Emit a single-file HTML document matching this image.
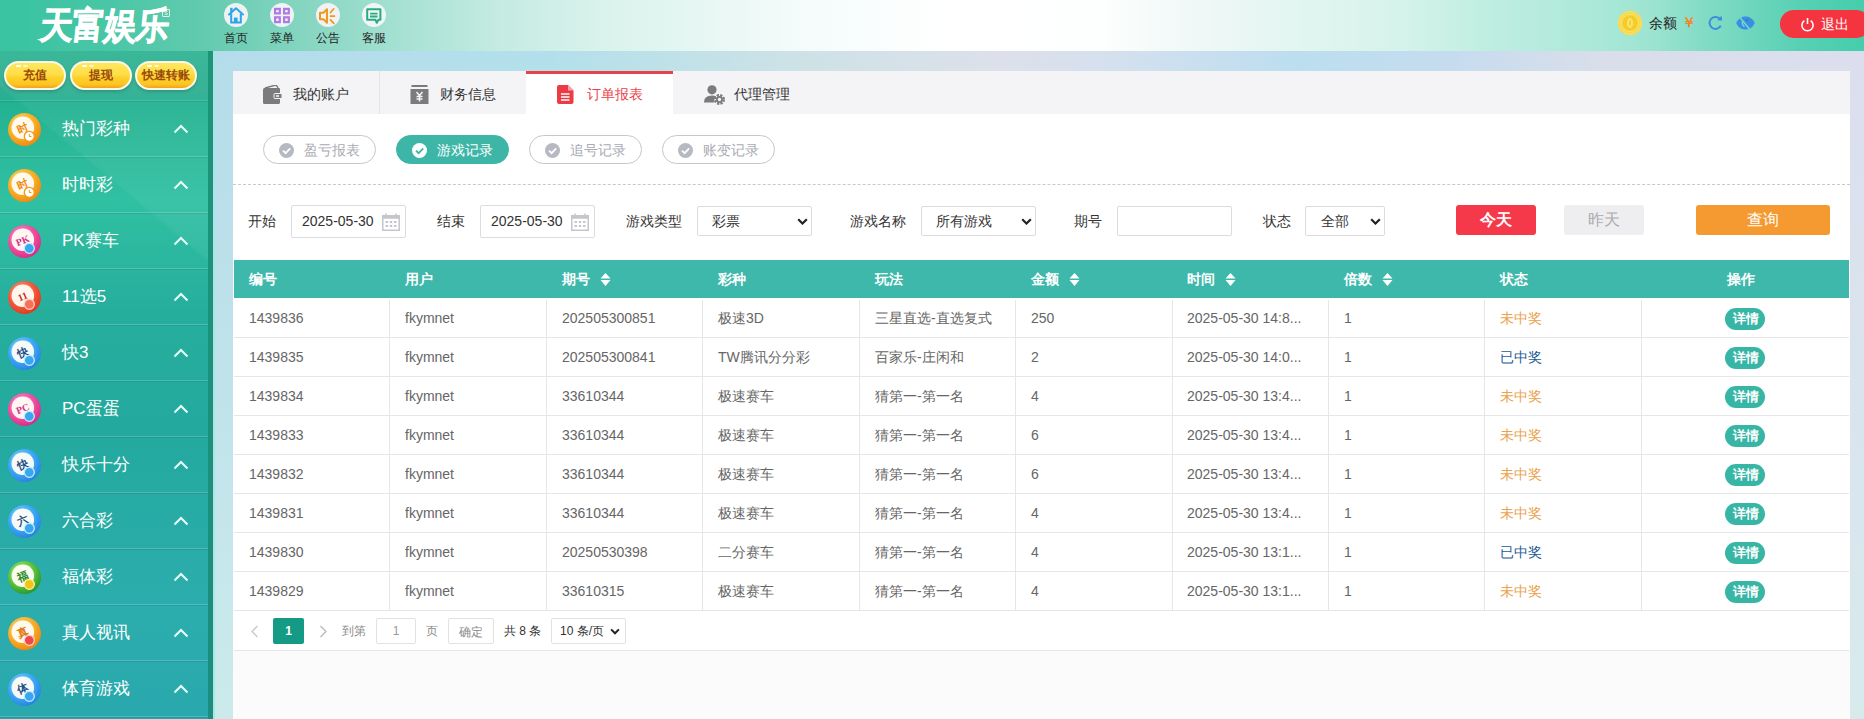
<!DOCTYPE html>
<html><head><meta charset="utf-8">
<style>
*{margin:0;padding:0;box-sizing:border-box}
html,body{width:1864px;height:719px;overflow:hidden;font-family:"Liberation Sans",sans-serif;font-size:14px;color:#333;background:#c9e4ec}
.abs{position:absolute}
#hdr{position:absolute;left:0;top:0;width:1864px;height:51px;background:linear-gradient(90deg,#38c3a1 0.0%,#47c6a5 5.36%,#62caae 10.73%,#84d5c0 16.09%,#a6e1d3 21.46%,#c5ebe2 26.82%,#d9f2ec 32.19%,#f4fbfb 42.92%,#ffffff 50.97%,#fdfefe 59.01%,#eff8f6 64.38%,#d5f3ea 75.11%,#bdede0 80.47%,#aae8d8 85.84%,#9de4d1 88.52%,#84dcc6 91.2%,#6fd6bd 93.88%,#58d0b4 96.57%,#44ceab 100.0%)}
#side{position:absolute;left:0;top:51px;width:213px;height:668px;background:linear-gradient(40deg,rgba(255,255,255,0) 0%,rgba(255,255,255,0) 74.5%,rgba(255,255,255,.05) 75%,rgba(255,255,255,.05) 100%),linear-gradient(180deg,#30b394 0.0%,#2eae91 5.99%,#22b191 7.49%,#2bb99a 14.97%,#30c0a2 22.46%,#26ae9d 38.92%,#23a99e 56.89%,#2cadad 82.34%,#29a8ad 100.0%)}
#side .bd{position:absolute;left:208px;top:0;width:5px;height:668px;background:linear-gradient(180deg,#1e9478,#1d8d7f)}
#main{position:absolute;left:213px;top:51px;width:1651px;height:668px;background:linear-gradient(180deg,rgba(214,240,236,0) 0%,rgba(212,240,236,.7) 100%),linear-gradient(90deg,#b5dcea 0.0%,#b2e0ea 20.41%,#cde2e6 35.55%,#dde0ea 47.67%,#d6e0ee 53.73%,#bbdeef 65.84%,#c5dcee 74.92%,#d9deea 84.01%,#dcdeee 100.0%)}
#card{position:absolute;left:233px;top:71px;width:1617px;height:660px;background:linear-gradient(180deg,#fff 0,#fff 580px,#fbfbfc 580px)}
.nav{top:3px;width:24px}
.nav .ic{width:24px;height:24px;border-radius:50%;background:rgba(244,244,246,.95)}
.nav .lb{position:absolute;left:0;top:27px;width:24px;font-size:12px;line-height:17px;color:#222;text-align:center;white-space:nowrap}
.ybtn{position:absolute;top:10px;width:62px;height:29px;border-radius:15px;background:#fbf9e8;padding:2px;box-shadow:0 2px 3px rgba(0,70,50,.22)}
.ybtn:before{content:"";position:absolute;left:12px;top:4px;width:5px;height:2px;border-radius:1px;background:#fff;box-shadow:7px 0 0 -0.3px #fff}
.ybtn span{display:block;width:100%;height:100%;border-radius:13px;background:linear-gradient(180deg,#ffe75e 0%,#fede48 45%,#fdcf2a 60%,#fbc623 85%,#f4a01a 100%);font-size:12px;font-weight:bold;color:#9a4a06;text-align:center;line-height:25px;white-space:nowrap}
.mi{position:absolute;left:0;width:208px;height:56px}
.mi .ball{position:absolute;left:8px;top:12px}
.mi .ball b{position:absolute;left:5px;top:6px;width:20px;font-size:11px;line-height:16px;text-align:center;transform:rotate(-15deg)}
.mi .ball i{position:absolute;left:19px;top:19px;width:11px;height:11px;border-radius:50%;border:1.5px solid #fff}
.mi .mt{position:absolute;left:62px;top:17px;font-size:17px;line-height:22px;color:#fff;white-space:nowrap}
.mi .chev{position:absolute;left:173px;top:23px}
.mi .sep{position:absolute;left:0;top:55px;width:208px;height:1px;background:rgba(255,255,255,.19);box-shadow:0 1px 0 rgba(0,40,30,.1)}
#tabbar{position:absolute;left:0;top:0;width:1617px;height:43px;background:#f4f4f7}
.tab{position:absolute;top:0;height:43px}
.tab .ti{position:absolute;top:14px}
.tab span{position:absolute;top:13px;font-size:14px;line-height:20px;color:#333;white-space:nowrap}
.tab.act{background:#fff;height:44px;border-top:3px solid #e8424a}
.tab.act .ti{top:11px}
.tab.act span{top:10px}
.tdiv{position:absolute;top:0;width:1px;height:43px;background:#e4e4e8}
.pill{position:absolute;top:64px;width:113px;height:29px;border:1px solid #c6c6cc;border-radius:15px;color:#aaabb3}
.pill i{position:absolute;left:15px;top:7px;width:15px;height:15px;line-height:0}
.pill span{position:absolute;left:40px;top:4px;font-size:14px;line-height:21px;white-space:nowrap}
.pill.on{background:#3db6a8;border-color:#3db6a8;color:#fff}
.lbl{position:absolute;top:140px;font-size:14px;line-height:20px;color:#333;white-space:nowrap}
.inp{position:absolute;border:1px solid #dcdcdf;border-radius:2px;background:#fff}
.inp span{position:absolute;font-size:14px;line-height:20px;color:#333;white-space:nowrap}
.inp i{position:absolute;line-height:0}
.btn{position:absolute;top:134px;height:30px;border-radius:3px;font-size:16px;line-height:30px;text-align:center}
#thead{position:absolute;left:1px;top:189px;width:1615px;height:38px;background:#3db8ab}
.th{position:absolute;top:198px;font-size:14px;line-height:20px;color:#fff;white-space:nowrap;font-weight:bold}
.th i{position:absolute;left:38px;top:4px;line-height:0}
.td{position:absolute;font-size:14px;line-height:41px;color:#666;white-space:nowrap}
.det{position:absolute;width:40px;height:22px;border-radius:11px;background:#37b5a5;color:#fff;font-size:12.5px;font-weight:bold;line-height:23px;text-align:center;margin-top:1px;padding-left:1px}
.hl{position:absolute;left:1px;width:1615px;height:1px;background:#e6e6e9}
.vl{position:absolute;top:229px;width:1px;height:310px;background:#e6e6e9}
.pg{position:absolute;top:550px;font-size:12px;line-height:20px;white-space:nowrap}
</style></head>
<body>
<div id="hdr">
 <div class="abs" style="left:40px;top:5px;font-size:33px;font-weight:900;color:#fff;letter-spacing:-1px;-webkit-text-stroke:0.6px #fff;transform:skewX(-6deg) scaleY(1.12);transform-origin:0 50%;line-height:42px;white-space:nowrap">天富娱乐</div>
 <div class="abs" style="left:162px;top:9px;width:8px;height:8px;border:1px solid rgba(255,255,255,.8);border-radius:1px;font-size:5px;color:#fff;line-height:6px;text-align:center">S</div>
 <div class="nav abs" style="left:224px"><div class="ic"><svg width="24" height="24" viewBox="0 0 24 24"><path d="M5 11.5 L12 5.3 L19 11.5" fill="none" stroke="#2ba4ec" stroke-width="2" stroke-linejoin="round" stroke-linecap="round"/><path d="M7.2 10.5 V19.5 H16.8 V10.5" fill="none" stroke="#2ba4ec" stroke-width="2"/><rect x="6.2" y="4.8" width="2.4" height="4.5" fill="#2ba4ec"/><rect x="9.9" y="14.6" width="3.7" height="5.4" fill="#2ba4ec"/></svg></div><div class="lb">首页</div></div>
 <div class="nav abs" style="left:270px"><div class="ic"><svg width="24" height="24" viewBox="0 0 24 24"><g fill="none" stroke="#b07ae6" stroke-width="2.2"><rect x="5.1" y="5.9" width="4.7" height="4.5"/><rect x="14.1" y="5.9" width="4.7" height="4.5"/><rect x="5.1" y="14.3" width="4.7" height="4.8"/><rect x="14.1" y="14.3" width="4.7" height="4.8"/></g></svg></div><div class="lb">菜单</div></div>
 <div class="nav abs" style="left:316px"><div class="ic"><svg width="24" height="24" viewBox="0 0 24 24"><path d="M4 9.8 H7.5 L11 6.3 V19.7 L7.5 16.2 H4 Z" fill="none" stroke="#f3961c" stroke-width="2" stroke-linejoin="round"/><path d="M14.5 9.5 L17.8 5.8 M14.6 13.2 H18.4 M14.5 16.9 L17.8 20.4" stroke="#f3961c" stroke-width="1.7" stroke-linecap="round"/></svg></div><div class="lb">公告</div></div>
 <div class="nav abs" style="left:362px"><div class="ic"><svg width="24" height="24" viewBox="0 0 24 24"><path d="M5.2 6.2 H18.4 V16.8 H16.5 L14.8 19.8 L13.5 16.8 H5.2 Z" fill="none" stroke="#25ad7e" stroke-width="2" stroke-linejoin="round"/><path d="M8.1 10.6 H15.5 M8.1 13.5 H15.5" stroke="#25ad7e" stroke-width="1.8"/></svg></div><div class="lb">客服</div></div>
 <div class="abs" style="left:1618px;top:11px;width:24px;height:24px;border-radius:50%;background:#f7d54a;box-shadow:inset 0 0 0 2px #f9dd55"><div class="abs" style="left:3px;top:3px;width:18px;height:18px;border-radius:50%;border:1.5px solid #fbe77d;background:#f6cc2a"></div><div class="abs" style="left:9px;top:7px;width:6px;height:10px;border-radius:50%;border:2px solid #f7e56d"></div></div>
 <div class="abs" style="left:1649px;top:14px;font-size:14px;color:#222;line-height:18px">余额</div>
 <div class="abs" style="left:1682px;top:12px;font-size:14px;color:#f3852a;line-height:20px;font-weight:bold">￥</div>
 <svg class="abs" style="left:1708px;top:15px" width="16" height="15" viewBox="0 0 16 15"><path d="M12.3 4.2 A6 6 0 1 0 12.8 10.8" fill="none" stroke="#3a8fe0" stroke-width="2"/><path d="M9.2 5.2 L14.2 5.6 L13.6 0.8 Z" fill="#3a8fe0"/></svg>
 <svg class="abs" style="left:1735px;top:15px" width="21" height="16" viewBox="0 0 21 16"><path d="M1.2 8 C3.5 3 7 1.5 10.5 1.5 C14 1.5 17.5 3 19.8 8 C17.5 13 14 14.5 10.5 14.5 C7 14.5 3.5 13 1.2 8 Z" fill="#3a8fe2"/><path d="M7.5 6.5 Q6.8 10 9.5 11.5" fill="none" stroke="#7fd8e8" stroke-width="1.3"/><path d="M11.5 4.5 L13 5.8" stroke="#2a70b8" stroke-width="1.2"/><path d="M3.5 0.8 L15.5 15.2" stroke="#6edbc2" stroke-width="1.6"/></svg>
 <div class="abs" style="left:1780px;top:10px;width:90px;height:28px;border-radius:14px;background:#f4343f"></div>
 <svg class="abs" style="left:1800px;top:16.5px" width="15" height="15" viewBox="0 0 15 15"><path d="M4.3 3.6 A5.6 5.6 0 1 0 10.7 3.6" fill="none" stroke="#fff" stroke-width="1.6"/><path d="M7.5 1 V7" stroke="#fff" stroke-width="1.6"/></svg>
 <div class="abs" style="left:1821px;top:15px;font-size:14px;color:#fff;line-height:18px;font-weight:500">退出</div>
</div>
<div id="side"><div class="bd"></div>
 <div class="ybtn" style="left:4px"><span>充值</span></div>
 <div class="ybtn" style="left:70px"><span>提现</span></div>
 <div class="ybtn" style="left:135px"><span>快速转账</span></div>
 <div class="abs" style="left:0;top:49px;width:208px;height:1px;background:rgba(255,255,255,.14);box-shadow:0 1px 0 rgba(0,40,30,.1)"></div>
 <div class="mi" style="top:50px"><svg class="ball" width="33" height="33" viewBox="0 0 33 33"><defs><radialGradient id="g11955" cx="40%" cy="35%" r="65%"><stop offset="0" stop-color="#fde38a"/><stop offset=".6" stop-color="#f8b026"/><stop offset="1" stop-color="#f08c14"/></radialGradient></defs><circle cx="16.5" cy="16.5" r="16.5" fill="url(#g11955)"/><circle cx="14.8" cy="14.8" r="11.3" fill="#fffdf6" opacity=".95"/><text x="14.5" y="19" font-size="11" font-weight="bold" fill="#f08a10" text-anchor="middle" transform="rotate(-22 14.5 15)" font-family="Liberation Serif, serif">时</text><circle cx="21.3" cy="23.3" r="5" fill="#fff" stroke="#f39a14" stroke-width="1.3"/><path d="M21.3 20.8 V23.5 H23.5" fill="none" stroke="#f39a14" stroke-width="1"/></svg><div class="mt">热门彩种</div><svg class="chev" width="16" height="10" viewBox="0 0 16 10"><path d="M1.5 8.5 L8 2 L14.5 8.5" fill="none" stroke="#e8fcf6" stroke-width="2.1"/></svg><div class="sep"></div></div>
 <div class="mi" style="top:106px"><svg class="ball" width="33" height="33" viewBox="0 0 33 33"><defs><radialGradient id="g11848" cx="40%" cy="35%" r="65%"><stop offset="0" stop-color="#fde38a"/><stop offset=".6" stop-color="#f8b026"/><stop offset="1" stop-color="#f08c14"/></radialGradient></defs><circle cx="16.5" cy="16.5" r="16.5" fill="url(#g11848)"/><circle cx="14.8" cy="14.8" r="11.3" fill="#fffdf6" opacity=".95"/><text x="14.5" y="19" font-size="11" font-weight="bold" fill="#f08a10" text-anchor="middle" transform="rotate(-22 14.5 15)" font-family="Liberation Serif, serif">时</text><circle cx="21.3" cy="23.3" r="5" fill="#fff" stroke="#f39a14" stroke-width="1.3"/><path d="M21.3 20.8 V23.5 H23.5" fill="none" stroke="#f39a14" stroke-width="1"/></svg><div class="mt">时时彩</div><svg class="chev" width="16" height="10" viewBox="0 0 16 10"><path d="M1.5 8.5 L8 2 L14.5 8.5" fill="none" stroke="#e8fcf6" stroke-width="2.1"/></svg><div class="sep"></div></div>
 <div class="mi" style="top:162px"><svg class="ball" width="33" height="33" viewBox="0 0 33 33"><defs><radialGradient id="g56289" cx="40%" cy="35%" r="65%"><stop offset="0" stop-color="#ffa8d6"/><stop offset=".6" stop-color="#f0509f"/><stop offset="1" stop-color="#d8308a"/></radialGradient></defs><circle cx="16.5" cy="16.5" r="16.5" fill="url(#g56289)"/><circle cx="14.8" cy="14.8" r="11.3" fill="#fffdf6" opacity=".95"/><text x="14.5" y="19" font-size="10" font-weight="bold" fill="#d6338a" text-anchor="middle" transform="rotate(-22 14.5 15)" font-family="Liberation Serif, serif">PK</text><circle cx="21.3" cy="23.3" r="5" fill="#3aa6ee" stroke="#bdf0ff" stroke-width="1.3"/></svg><div class="mt">PK赛车</div><svg class="chev" width="16" height="10" viewBox="0 0 16 10"><path d="M1.5 8.5 L8 2 L14.5 8.5" fill="none" stroke="#e8fcf6" stroke-width="2.1"/></svg><div class="sep"></div></div>
 <div class="mi" style="top:218px"><svg class="ball" width="33" height="33" viewBox="0 0 33 33"><defs><radialGradient id="g8238" cx="40%" cy="35%" r="65%"><stop offset="0" stop-color="#ffb49a"/><stop offset=".6" stop-color="#f25a3c"/><stop offset="1" stop-color="#e23b22"/></radialGradient></defs><circle cx="16.5" cy="16.5" r="16.5" fill="url(#g8238)"/><circle cx="14.8" cy="14.8" r="11.3" fill="#fffdf6" opacity=".95"/><text x="14.5" y="19" font-size="10" font-weight="bold" fill="#c8281a" text-anchor="middle" transform="rotate(-22 14.5 15)" font-family="Liberation Serif, serif">11</text><circle cx="21.3" cy="23.3" r="5" fill="#f6705a" stroke="#ffd0c0" stroke-width="1.3"/></svg><div class="mt">11选5</div><svg class="chev" width="16" height="10" viewBox="0 0 16 10"><path d="M1.5 8.5 L8 2 L14.5 8.5" fill="none" stroke="#e8fcf6" stroke-width="2.1"/></svg><div class="sep"></div></div>
 <div class="mi" style="top:274px"><svg class="ball" width="33" height="33" viewBox="0 0 33 33"><defs><radialGradient id="g82503" cx="40%" cy="35%" r="65%"><stop offset="0" stop-color="#a6e0ff"/><stop offset=".6" stop-color="#3aa9f5"/><stop offset="1" stop-color="#2a86e0"/></radialGradient></defs><circle cx="16.5" cy="16.5" r="16.5" fill="url(#g82503)"/><circle cx="14.8" cy="14.8" r="11.3" fill="#fffdf6" opacity=".95"/><text x="14.5" y="19" font-size="11" font-weight="bold" fill="#1d4f8a" text-anchor="middle" transform="rotate(-22 14.5 15)" font-family="Liberation Serif, serif">快</text><circle cx="21.3" cy="23.3" r="5" fill="#3aa6ee" stroke="#bdf0ff" stroke-width="1.3"/></svg><div class="mt">快3</div><svg class="chev" width="16" height="10" viewBox="0 0 16 10"><path d="M1.5 8.5 L8 2 L14.5 8.5" fill="none" stroke="#e8fcf6" stroke-width="2.1"/></svg><div class="sep"></div></div>
 <div class="mi" style="top:330px"><svg class="ball" width="33" height="33" viewBox="0 0 33 33"><defs><radialGradient id="g48274" cx="40%" cy="35%" r="65%"><stop offset="0" stop-color="#ffa8d6"/><stop offset=".6" stop-color="#f0509f"/><stop offset="1" stop-color="#d8308a"/></radialGradient></defs><circle cx="16.5" cy="16.5" r="16.5" fill="url(#g48274)"/><circle cx="14.8" cy="14.8" r="11.3" fill="#fffdf6" opacity=".95"/><text x="14.5" y="19" font-size="10" font-weight="bold" fill="#d6338a" text-anchor="middle" transform="rotate(-22 14.5 15)" font-family="Liberation Serif, serif">PC</text><circle cx="21.3" cy="23.3" r="5" fill="#3aa6ee" stroke="#bdf0ff" stroke-width="1.3"/></svg><div class="mt">PC蛋蛋</div><svg class="chev" width="16" height="10" viewBox="0 0 16 10"><path d="M1.5 8.5 L8 2 L14.5 8.5" fill="none" stroke="#e8fcf6" stroke-width="2.1"/></svg><div class="sep"></div></div>
 <div class="mi" style="top:386px"><svg class="ball" width="33" height="33" viewBox="0 0 33 33"><defs><radialGradient id="g10251" cx="40%" cy="35%" r="65%"><stop offset="0" stop-color="#a6e0ff"/><stop offset=".6" stop-color="#3aa9f5"/><stop offset="1" stop-color="#2a86e0"/></radialGradient></defs><circle cx="16.5" cy="16.5" r="16.5" fill="url(#g10251)"/><circle cx="14.8" cy="14.8" r="11.3" fill="#fffdf6" opacity=".95"/><text x="14.5" y="19" font-size="11" font-weight="bold" fill="#1d4f8a" text-anchor="middle" transform="rotate(-22 14.5 15)" font-family="Liberation Serif, serif">快</text><circle cx="21.3" cy="23.3" r="5" fill="#3aa6ee" stroke="#bdf0ff" stroke-width="1.3"/></svg><div class="mt">快乐十分</div><svg class="chev" width="16" height="10" viewBox="0 0 16 10"><path d="M1.5 8.5 L8 2 L14.5 8.5" fill="none" stroke="#e8fcf6" stroke-width="2.1"/></svg><div class="sep"></div></div>
 <div class="mi" style="top:442px"><svg class="ball" width="33" height="33" viewBox="0 0 33 33"><defs><radialGradient id="g31161" cx="40%" cy="35%" r="65%"><stop offset="0" stop-color="#a6e0ff"/><stop offset=".6" stop-color="#3aa9f5"/><stop offset="1" stop-color="#2a86e0"/></radialGradient></defs><circle cx="16.5" cy="16.5" r="16.5" fill="url(#g31161)"/><circle cx="14.8" cy="14.8" r="11.3" fill="#fffdf6" opacity=".95"/><text x="14.5" y="19" font-size="11" font-weight="bold" fill="#1d4f8a" text-anchor="middle" transform="rotate(-22 14.5 15)" font-family="Liberation Serif, serif">六</text><circle cx="21.3" cy="23.3" r="5" fill="#3aa6ee" stroke="#bdf0ff" stroke-width="1.3"/></svg><div class="mt">六合彩</div><svg class="chev" width="16" height="10" viewBox="0 0 16 10"><path d="M1.5 8.5 L8 2 L14.5 8.5" fill="none" stroke="#e8fcf6" stroke-width="2.1"/></svg><div class="sep"></div></div>
 <div class="mi" style="top:498px"><svg class="ball" width="33" height="33" viewBox="0 0 33 33"><defs><radialGradient id="g4461" cx="40%" cy="35%" r="65%"><stop offset="0" stop-color="#b6f08a"/><stop offset=".6" stop-color="#5cc43c"/><stop offset="1" stop-color="#2e9a2e"/></radialGradient></defs><circle cx="16.5" cy="16.5" r="16.5" fill="url(#g4461)"/><circle cx="14.8" cy="14.8" r="11.3" fill="#fffdf6" opacity=".95"/><text x="14.5" y="19" font-size="11" font-weight="bold" fill="#2a8a2a" text-anchor="middle" transform="rotate(-22 14.5 15)" font-family="Liberation Serif, serif">福</text><circle cx="21.3" cy="23.3" r="5" fill="#f5c21a" stroke="#fff3a0" stroke-width="1.3"/></svg><div class="mt">福体彩</div><svg class="chev" width="16" height="10" viewBox="0 0 16 10"><path d="M1.5 8.5 L8 2 L14.5 8.5" fill="none" stroke="#e8fcf6" stroke-width="2.1"/></svg><div class="sep"></div></div>
 <div class="mi" style="top:554px"><svg class="ball" width="33" height="33" viewBox="0 0 33 33"><defs><radialGradient id="g85073" cx="40%" cy="35%" r="65%"><stop offset="0" stop-color="#fde08a"/><stop offset=".6" stop-color="#f8b02a"/><stop offset="1" stop-color="#ee8a10"/></radialGradient></defs><circle cx="16.5" cy="16.5" r="16.5" fill="url(#g85073)"/><circle cx="14.8" cy="14.8" r="11.3" fill="#fffdf6" opacity=".95"/><text x="14.5" y="19" font-size="11" font-weight="bold" fill="#e07a10" text-anchor="middle" transform="rotate(-22 14.5 15)" font-family="Liberation Serif, serif">真</text><circle cx="21.3" cy="23.3" r="5" fill="#f04848" stroke="#ffd0d0" stroke-width="1.3"/></svg><div class="mt">真人视讯</div><svg class="chev" width="16" height="10" viewBox="0 0 16 10"><path d="M1.5 8.5 L8 2 L14.5 8.5" fill="none" stroke="#e8fcf6" stroke-width="2.1"/></svg><div class="sep"></div></div>
 <div class="mi" style="top:610px"><svg class="ball" width="33" height="33" viewBox="0 0 33 33"><defs><radialGradient id="g20845" cx="40%" cy="35%" r="65%"><stop offset="0" stop-color="#a6e0ff"/><stop offset=".6" stop-color="#3aa9f5"/><stop offset="1" stop-color="#2a86e0"/></radialGradient></defs><circle cx="16.5" cy="16.5" r="16.5" fill="url(#g20845)"/><circle cx="14.8" cy="14.8" r="11.3" fill="#fffdf6" opacity=".95"/><text x="14.5" y="19" font-size="11" font-weight="bold" fill="#1d4f8a" text-anchor="middle" transform="rotate(-22 14.5 15)" font-family="Liberation Serif, serif">体</text><circle cx="21.3" cy="23.3" r="5" fill="#3aa6ee" stroke="#bdf0ff" stroke-width="1.3"/></svg><div class="mt">体育游戏</div><svg class="chev" width="16" height="10" viewBox="0 0 16 10"><path d="M1.5 8.5 L8 2 L14.5 8.5" fill="none" stroke="#e8fcf6" stroke-width="2.1"/></svg><div class="sep"></div></div>
</div>
<div id="main"><div class="abs" style="left:0;top:0;width:2px;height:668px;background:rgba(160,232,228,.8)"></div></div>
<div id="card">
 <div id="tabbar">
  <div class="tab" style="left:0;width:146px"><svg class="ti" style="left:29px" width="20" height="19" viewBox="0 0 20 19"><path d="M1 4.5 Q1 3 2.5 3 H17 Q18 3 18 4 V17.5 Q18 19 16.5 19 H2.5 Q1 19 1 17.5 Z" fill="#7b7b7b"/><path d="M3 3 L12 0.5 Q14 0 15 1.2 L16 3" fill="none" stroke="#7b7b7b" stroke-width="1.4"/><rect x="12" y="8.5" width="8" height="5" rx="1" fill="#7b7b7b" stroke="#f4f4f7" stroke-width="1"/><rect x="14" y="10.2" width="3" height="1.6" fill="#f4f4f7"/></svg><span style="left:60px">我的账户</span></div>
  <div class="tdiv" style="left:146px"></div>
  <div class="tab" style="left:147px;width:146px"><svg class="ti" style="left:30px" width="19" height="19" viewBox="0 0 19 19"><rect x="1.5" y="0" width="16" height="2" fill="#7b7b7b"/><rect x="0.5" y="4" width="18" height="15" fill="#7b7b7b"/><path d="M6.5 7 L9.5 10.5 L12.5 7 M9.5 10.5 V16.5 M6.5 11.5 H12.5 M6.5 14 H12.5" fill="none" stroke="#f4f4f7" stroke-width="1.5"/></svg><span style="left:60px">财务信息</span></div>
  <div class="tab act" style="left:293px;width:147px"><svg class="ti" style="left:31px" width="17" height="19" viewBox="0 0 17 19"><path d="M2 0 H11 L16.5 5.5 V17 Q16.5 19 14.5 19 H2 Q0 19 0 17 V2 Q0 0 2 0 Z" fill="#ed3b45"/><path d="M11 0 V5.5 H16.5" fill="#f7a0a5"/><path d="M4 9 H12.5 M4 12 H12.5 M4 15 H12.5" stroke="#fff" stroke-width="1.6"/></svg><span style="left:61px;color:#e9434b">订单报表</span></div>
  <div class="tab" style="left:440px;width:147px"><svg class="ti" style="left:31px" width="21" height="20" viewBox="0 0 21 20"><circle cx="8" cy="4.8" r="4.6" fill="#7b7b7b"/><path d="M0 17 Q0 10.5 8 10.5 Q10.5 10.5 12 11.2 Q9.5 13.5 10.5 17.5 H0 Z" fill="#7b7b7b"/><circle cx="15.5" cy="14.5" r="4.3" fill="none" stroke="#7b7b7b" stroke-width="2.4" stroke-dasharray="2.2 1.2"/><circle cx="15.5" cy="14.5" r="2.6" fill="none" stroke="#7b7b7b" stroke-width="1.8"/></svg><span style="left:61px">代理管理</span></div>
 </div>
 <div class="pill" style="left:30px"><i><svg width="15" height="15" viewBox="0 0 15 15"><circle cx="7.5" cy="7.5" r="7.5" fill="#b7b9c2"/><path d="M4 7.6 L6.6 10.2 L11.2 5.4" fill="none" stroke="#fff" stroke-width="1.8"/></svg></i><span>盈亏报表</span></div>
 <div class="pill on" style="left:163px"><i><svg width="15" height="15" viewBox="0 0 15 15"><circle cx="7.5" cy="7.5" r="7.5" fill="#fff"/><path d="M4 7.6 L6.6 10.2 L11.2 5.4" fill="none" stroke="#3cb5a8" stroke-width="1.8"/></svg></i><span>游戏记录</span></div>
 <div class="pill" style="left:296px"><i><svg width="15" height="15" viewBox="0 0 15 15"><circle cx="7.5" cy="7.5" r="7.5" fill="#b7b9c2"/><path d="M4 7.6 L6.6 10.2 L11.2 5.4" fill="none" stroke="#fff" stroke-width="1.8"/></svg></i><span>追号记录</span></div>
 <div class="pill" style="left:429px"><i><svg width="15" height="15" viewBox="0 0 15 15"><circle cx="7.5" cy="7.5" r="7.5" fill="#b7b9c2"/><path d="M4 7.6 L6.6 10.2 L11.2 5.4" fill="none" stroke="#fff" stroke-width="1.8"/></svg></i><span>账变记录</span></div>
 <div class="abs" style="left:0;top:113px;width:1617px;height:0;border-top:1px dashed #c9c9c9"></div>
<div class="lbl" style="left:15px">开始</div><div class="inp" style="left:58px;top:134px;width:115px;height:33px"><span style="left:10px;top:5px;color:#333">2025-05-30</span><i style="left:90px;top:7px"><svg width="18" height="18" viewBox="0 0 18 18"><rect x="0.75" y="2.75" width="16.5" height="14.5" fill="none" stroke="#c4c6cc" stroke-width="1.5"/><rect x="0.75" y="2.75" width="16.5" height="3" fill="#c4c6cc"/><path d="M4 0.5 V4 M14 0.5 V4" stroke="#c4c6cc" stroke-width="1.5"/><g fill="#c4c6cc"><rect x="3.5" y="8" width="2.5" height="2"/><rect x="7.75" y="8" width="2.5" height="2"/><rect x="12" y="8" width="2.5" height="2"/><rect x="3.5" y="12" width="2.5" height="2"/><rect x="7.75" y="12" width="2.5" height="2"/><rect x="12" y="12" width="2.5" height="2"/></g></svg></i></div><div class="lbl" style="left:204px">结束</div><div class="inp" style="left:247px;top:134px;width:115px;height:33px"><span style="left:10px;top:5px;color:#333">2025-05-30</span><i style="left:90px;top:7px"><svg width="18" height="18" viewBox="0 0 18 18"><rect x="0.75" y="2.75" width="16.5" height="14.5" fill="none" stroke="#c4c6cc" stroke-width="1.5"/><rect x="0.75" y="2.75" width="16.5" height="3" fill="#c4c6cc"/><path d="M4 0.5 V4 M14 0.5 V4" stroke="#c4c6cc" stroke-width="1.5"/><g fill="#c4c6cc"><rect x="3.5" y="8" width="2.5" height="2"/><rect x="7.75" y="8" width="2.5" height="2"/><rect x="12" y="8" width="2.5" height="2"/><rect x="3.5" y="12" width="2.5" height="2"/><rect x="7.75" y="12" width="2.5" height="2"/><rect x="12" y="12" width="2.5" height="2"/></g></svg></i></div><div class="lbl" style="left:393px">游戏类型</div><div class="inp" style="left:464px;top:135px;width:115px;height:30px"><span style="left:14px;top:4px">彩票</span><i style="left:99px;top:11px"><svg width="11" height="7" viewBox="0 0 11 7"><path d="M1.2 1.2 L5.5 5.5 L9.8 1.2" fill="none" stroke="#222" stroke-width="2.2"/></svg></i></div><div class="lbl" style="left:617px">游戏名称</div><div class="inp" style="left:688px;top:135px;width:115px;height:30px"><span style="left:14px;top:4px">所有游戏</span><i style="left:99px;top:11px"><svg width="11" height="7" viewBox="0 0 11 7"><path d="M1.2 1.2 L5.5 5.5 L9.8 1.2" fill="none" stroke="#222" stroke-width="2.2"/></svg></i></div><div class="lbl" style="left:841px">期号</div><div class="inp" style="left:884px;top:135px;width:115px;height:30px"></div><div class="lbl" style="left:1030px">状态</div><div class="inp" style="left:1072px;top:135px;width:80px;height:30px"><span style="left:15px;top:4px">全部</span><i style="left:64px;top:11px"><svg width="11" height="7" viewBox="0 0 11 7"><path d="M1.2 1.2 L5.5 5.5 L9.8 1.2" fill="none" stroke="#222" stroke-width="2.2"/></svg></i></div><div class="btn" style="left:1223px;width:80px;background:#f5394a;color:#fff;font-weight:bold">今天</div><div class="btn" style="left:1331px;width:80px;background:#eeeef0;color:#ababae;font-weight:500">昨天</div><div class="btn" style="left:1463px;width:134px;background:#f49a31;color:#fff;font-weight:500">查询</div>
<div id="thead"></div><div class="th" style="left:16px">编号</div><div class="th" style="left:172px">用户</div><div class="th" style="left:329px">期号<i><svg width="11" height="13" viewBox="0 0 11 13"><path d="M5.5 0 L10.5 5.6 H0.5 Z M5.5 13 L10.5 7 H0.5 Z" fill="#fff"/></svg></i></div><div class="th" style="left:485px">彩种</div><div class="th" style="left:642px">玩法</div><div class="th" style="left:798px">金额<i><svg width="11" height="13" viewBox="0 0 11 13"><path d="M5.5 0 L10.5 5.6 H0.5 Z M5.5 13 L10.5 7 H0.5 Z" fill="#fff"/></svg></i></div><div class="th" style="left:954px">时间<i><svg width="11" height="13" viewBox="0 0 11 13"><path d="M5.5 0 L10.5 5.6 H0.5 Z M5.5 13 L10.5 7 H0.5 Z" fill="#fff"/></svg></i></div><div class="th" style="left:1111px">倍数<i><svg width="11" height="13" viewBox="0 0 11 13"><path d="M5.5 0 L10.5 5.6 H0.5 Z M5.5 13 L10.5 7 H0.5 Z" fill="#fff"/></svg></i></div><div class="th" style="left:1267px">状态</div><div class="th" style="left:1494px">操作</div><div class="td" style="left:16px;top:227px">1439836</div><div class="td" style="left:172px;top:227px">fkymnet</div><div class="td" style="left:329px;top:227px">202505300851</div><div class="td" style="left:485px;top:227px">极速3D</div><div class="td" style="left:642px;top:227px">三星直选-直选复式</div><div class="td" style="left:798px;top:227px">250</div><div class="td" style="left:954px;top:227px">2025-05-30 14:8...</div><div class="td" style="left:1111px;top:227px">1</div><div class="td" style="left:1267px;top:227px;color:#eca24c">未中奖</div><div class="det" style="left:1492px;top:236px">详情</div><div class="hl" style="top:266px"></div><div class="td" style="left:16px;top:266px">1439835</div><div class="td" style="left:172px;top:266px">fkymnet</div><div class="td" style="left:329px;top:266px">202505300841</div><div class="td" style="left:485px;top:266px">TW腾讯分分彩</div><div class="td" style="left:642px;top:266px">百家乐-庄闲和</div><div class="td" style="left:798px;top:266px">2</div><div class="td" style="left:954px;top:266px">2025-05-30 14:0...</div><div class="td" style="left:1111px;top:266px">1</div><div class="td" style="left:1267px;top:266px;color:#1d5b94">已中奖</div><div class="det" style="left:1492px;top:275px">详情</div><div class="hl" style="top:305px"></div><div class="td" style="left:16px;top:305px">1439834</div><div class="td" style="left:172px;top:305px">fkymnet</div><div class="td" style="left:329px;top:305px">33610344</div><div class="td" style="left:485px;top:305px">极速赛车</div><div class="td" style="left:642px;top:305px">猜第一-第一名</div><div class="td" style="left:798px;top:305px">4</div><div class="td" style="left:954px;top:305px">2025-05-30 13:4...</div><div class="td" style="left:1111px;top:305px">1</div><div class="td" style="left:1267px;top:305px;color:#eca24c">未中奖</div><div class="det" style="left:1492px;top:314px">详情</div><div class="hl" style="top:344px"></div><div class="td" style="left:16px;top:344px">1439833</div><div class="td" style="left:172px;top:344px">fkymnet</div><div class="td" style="left:329px;top:344px">33610344</div><div class="td" style="left:485px;top:344px">极速赛车</div><div class="td" style="left:642px;top:344px">猜第一-第一名</div><div class="td" style="left:798px;top:344px">6</div><div class="td" style="left:954px;top:344px">2025-05-30 13:4...</div><div class="td" style="left:1111px;top:344px">1</div><div class="td" style="left:1267px;top:344px;color:#eca24c">未中奖</div><div class="det" style="left:1492px;top:353px">详情</div><div class="hl" style="top:383px"></div><div class="td" style="left:16px;top:383px">1439832</div><div class="td" style="left:172px;top:383px">fkymnet</div><div class="td" style="left:329px;top:383px">33610344</div><div class="td" style="left:485px;top:383px">极速赛车</div><div class="td" style="left:642px;top:383px">猜第一-第一名</div><div class="td" style="left:798px;top:383px">6</div><div class="td" style="left:954px;top:383px">2025-05-30 13:4...</div><div class="td" style="left:1111px;top:383px">1</div><div class="td" style="left:1267px;top:383px;color:#eca24c">未中奖</div><div class="det" style="left:1492px;top:392px">详情</div><div class="hl" style="top:422px"></div><div class="td" style="left:16px;top:422px">1439831</div><div class="td" style="left:172px;top:422px">fkymnet</div><div class="td" style="left:329px;top:422px">33610344</div><div class="td" style="left:485px;top:422px">极速赛车</div><div class="td" style="left:642px;top:422px">猜第一-第一名</div><div class="td" style="left:798px;top:422px">4</div><div class="td" style="left:954px;top:422px">2025-05-30 13:4...</div><div class="td" style="left:1111px;top:422px">1</div><div class="td" style="left:1267px;top:422px;color:#eca24c">未中奖</div><div class="det" style="left:1492px;top:431px">详情</div><div class="hl" style="top:461px"></div><div class="td" style="left:16px;top:461px">1439830</div><div class="td" style="left:172px;top:461px">fkymnet</div><div class="td" style="left:329px;top:461px">20250530398</div><div class="td" style="left:485px;top:461px">二分赛车</div><div class="td" style="left:642px;top:461px">猜第一-第一名</div><div class="td" style="left:798px;top:461px">4</div><div class="td" style="left:954px;top:461px">2025-05-30 13:1...</div><div class="td" style="left:1111px;top:461px">1</div><div class="td" style="left:1267px;top:461px;color:#1d5b94">已中奖</div><div class="det" style="left:1492px;top:470px">详情</div><div class="hl" style="top:500px"></div><div class="td" style="left:16px;top:500px">1439829</div><div class="td" style="left:172px;top:500px">fkymnet</div><div class="td" style="left:329px;top:500px">33610315</div><div class="td" style="left:485px;top:500px">极速赛车</div><div class="td" style="left:642px;top:500px">猜第一-第一名</div><div class="td" style="left:798px;top:500px">4</div><div class="td" style="left:954px;top:500px">2025-05-30 13:1...</div><div class="td" style="left:1111px;top:500px">1</div><div class="td" style="left:1267px;top:500px;color:#eca24c">未中奖</div><div class="det" style="left:1492px;top:509px">详情</div><div class="hl" style="top:539px"></div><div class="vl" style="left:156px"></div><div class="vl" style="left:313px"></div><div class="vl" style="left:469px"></div><div class="vl" style="left:626px"></div><div class="vl" style="left:782px"></div><div class="vl" style="left:939px"></div><div class="vl" style="left:1095px"></div><div class="vl" style="left:1251px"></div><div class="vl" style="left:1408px"></div>
<svg class="abs" style="left:17px;top:554px" width="9" height="13" viewBox="0 0 9 13"><path d="M7.5 1 L2 6.5 L7.5 12" fill="none" stroke="#c8c8c8" stroke-width="1.3"/></svg><div class="abs" style="left:40px;top:547px;width:31px;height:26px;background:#159a86;border-radius:2px;color:#fff;font-size:12px;font-weight:bold;text-align:center;line-height:26px">1</div><svg class="abs" style="left:86px;top:554px" width="9" height="13" viewBox="0 0 9 13"><path d="M1.5 1 L7 6.5 L1.5 12" fill="none" stroke="#b8b8b8" stroke-width="1.3"/></svg><div class="pg" style="left:109px;color:#8a8a8a">到第</div><div class="abs" style="left:143px;top:547px;width:40px;height:26px;border:1px solid #e2e2e2;border-radius:2px;font-size:12px;color:#999;text-align:center;line-height:24px">1</div><div class="pg" style="left:193px;color:#8a8a8a">页</div><div class="abs" style="left:215px;top:547px;width:46px;height:26px;border:1px solid #e2e2e2;border-radius:2px;font-size:12px;color:#888;text-align:center;line-height:26px">确定</div><div class="pg" style="left:271px;color:#333">共 8 条</div><div class="abs" style="left:318px;top:547px;width:75px;height:26px;border:1px solid #e2e2e2;border-radius:2px;font-size:12px;color:#333;line-height:24px;padding-left:8px">10 条/页<i style="position:absolute;left:58px;top:9px;line-height:0"><svg width="10" height="7" viewBox="0 0 11 7"><path d="M1.2 1.2 L5.5 5.5 L9.8 1.2" fill="none" stroke="#222" stroke-width="2.2"/></svg></i></div><div class="hl" style="top:579px"></div>
</div>
</body></html>
